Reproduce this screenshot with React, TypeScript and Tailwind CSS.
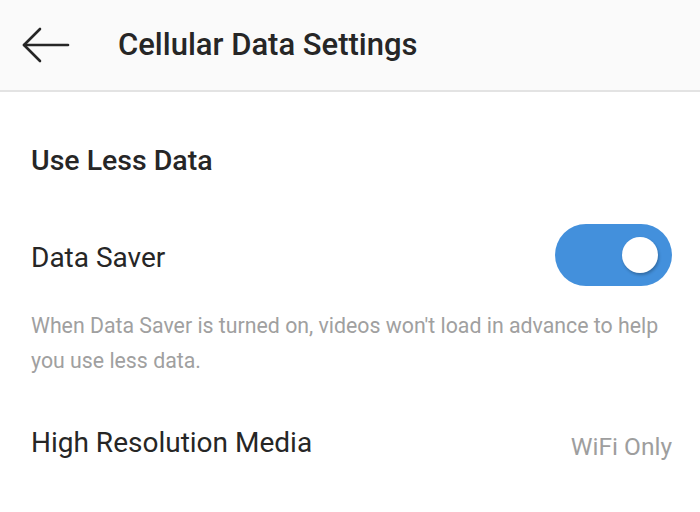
import React from 'react';

function BackArrow() {
  return (
    <svg width="48" height="36" viewBox="0 0 48 36" fill="none" stroke="#262626" strokeWidth="2.6" strokeLinecap="round" strokeLinejoin="round">
      <path d="M2 18 H46" />
      <path d="M18 2 L2 18 L18 34" />
    </svg>
  );
}

function Toggle({ on }: { on: boolean }) {
  return (
    <div className={`flex h-[62px] w-[117px] items-center rounded-full px-[14px] ${on ? 'justify-end bg-[#4390dc]' : 'justify-start bg-[#cccccc]'}`}>
      <div className="h-[36px] w-[36px] rounded-full bg-white shadow-[1px_2px_3px_rgba(0,0,0,0.25)]" />
    </div>
  );
}

export default function App() {
  return (
    <div className="h-[512px] w-[700px] overflow-hidden bg-white font-['Roboto','Liberation_Sans',sans-serif]">
      <header className="flex h-[92px] items-center border-b-[2px] border-[#e3e3e3] bg-[#fafafa] pl-[22px]">
        <BackArrow />
        <h1 className="ml-[48px] text-[31px] font-medium leading-[36px] text-[#262626]">Cellular Data Settings</h1>
      </header>
      <main className="px-[31px]">
        <h2 className="mt-[51px] text-[28.5px] font-medium leading-[36px] text-[#262626]">Use Less Data</h2>
        <div className="mt-[45px] flex items-start justify-between">
          <span className="mt-[16px] text-[28px] leading-[36px] text-[#262626]">Data Saver</span>
          <div className="mr-[-3px]">
            <Toggle on />
          </div>
        </div>
        <p className="mt-[22px] text-[21.3px] leading-[35px] text-[#a0a0a0]">
          When Data Saver is turned on, videos won't load in advance to help you use less data.
        </p>
        <div className="mt-[47px] flex items-start justify-between">
          <span className="text-[28px] leading-[36px] text-[#262626]">High Resolution Media</span>
          <span className="mr-[-3px] mt-[4px] text-[24.5px] leading-[36px] text-[#9e9e9e]">WiFi Only</span>
        </div>
      </main>
    </div>
  );
}
